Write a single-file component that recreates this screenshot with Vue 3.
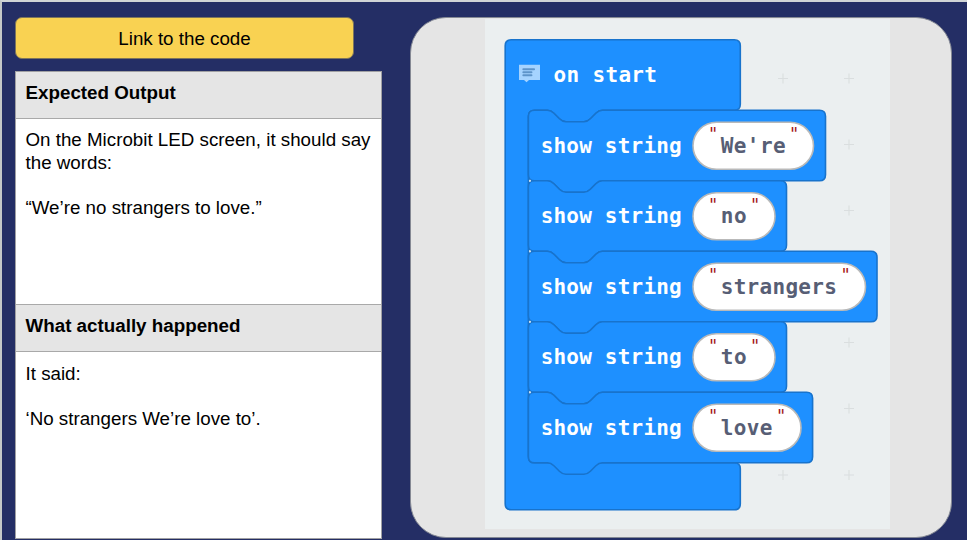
<script setup>
const rows = [
  { text: "We're", y: 110.3, right: 825.5, pill: 120.5, quote: 789, width: 65 },
  { text: 'no', y: 180.8, right: 786.5, pill: 82, quote: 750, width: 26 },
  { text: 'strangers', y: 251.3, right: 877, pill: 172.5, quote: 840.5, width: 116.2 },
  { text: 'to', y: 321.8, right: 786.5, pill: 82, quote: 750, width: 26 },
  { text: 'love', y: 392.3, right: 812.6, pill: 108, quote: 776, width: 51.6 }
]
const marks = [
  [783, 78.5], [849, 78.5], [849, 144.5], [849, 210.5],
  [849, 342.5], [849, 408.5], [783, 475], [849, 475]
]
const notch = 'h13 c3 0 4.5 1 6.5 3 l5.5 5.5 c2 2 4 3 6.5 3 h18 c2.5 0 4.5 -1 6.5 -3 l5.5 -5.5 c2 -2 3.5 -3 6.5 -3'
const notchBack =
  'H602.4 c-3 0 -4.5 1 -6.5 3 l-5.5 5.5 c-2 2 -4 3 -6.5 3 h-18 c-2.5 0 -4.5 -1 -6.5 -3 l-5.5 -5.5 c-2 -2 -3.5 -3 -6.5 -3 H534.4'
const outer =
  `M511.2 39.8 H734.3 q6 0 6 6 V104.3 q0 6 -6 6 ${notchBack} q-6 0 -6 6 V456.8 q0 6 6 6 H734.3 q6 0 6 6 V503.8 q0 6 -6 6 H511.2 q-6 0 -6 -6 V45.8 q0 -6 6 -6Z`
const statement = (r) =>
  `M534.4 ${r.y} ${notch} H${r.right - 6} q6 0 6 6 v58.5 q0 6 -6 6 ${notchBack} q-6 0 -6 -6 v-58.5 q0 -6 6 -6 Z`
</script>

<template>
  <main class="slide">
    <section class="left">
      <a class="link">Link to the code</a>
      <div class="table">
        <h2>Expected Output</h2>
        <div class="cell expected">
          <p>On the Microbit LED screen, it should say the words:</p>
          <p>“We’re no strangers to love.”</p>
        </div>
        <h2>What actually happened</h2>
        <div class="cell actual">
          <p>It said:</p>
          <p>‘No strangers We’re love to’.</p>
        </div>
      </div>
    </section>
    <section class="panel">
      <svg class="workspace" viewBox="485 19 405 510" width="405" height="510">
        <rect x="485" y="19" width="405" height="510" fill="#ebeff0" />
        <path v-for="(m, i) in marks" :key="i" :d="`M${m[0] - 5} ${m[1]}h10M${m[0]} ${m[1] - 5}v10`" stroke="#dadedf" stroke-width="1.1" />
        <path class="block" :d="outer" />
        <path d="M519 64.7h21v15.3h-11l-2.5 2.3l-2.5 -2.3h-5z" fill="#a5d3ff" />
        <path d="M523.3 69.2h10.8M523.3 72.3h8.2M523.3 75.2h8.2" stroke="#5d94ca" stroke-width="1.9" stroke-linecap="round" />
        <text class="label" x="553.5" y="82" textLength="103.5">on start</text>
        <g v-for="r in rows" :key="r.text">
          <path class="block" :d="statement(r)" />
          <text class="label" x="540.7" :y="r.y + 42.6" textLength="141">show string</text>
          <rect class="pill" x="693" :y="r.y + 11.9" :width="r.pill" height="47" rx="23.5" />
          <text class="quote" x="708" :y="r.y + 30">"</text>
          <text class="value" x="720.7" :y="r.y + 42.6" :textLength="r.width">{{ r.text }}</text>
          <text class="quote" :x="r.quote" :y="r.y + 30">"</text>
        </g>
        <g fill="#c8def0">
          <circle v-for="r in rows.slice(1)" :key="r.y" cx="530" :cy="r.y" r="1.1" />
        </g>
      </svg>
    </section>
  </main>
</template>

<style>
body { margin: 0; overflow: hidden; }
</style>
<style scoped>
.slide {
  box-sizing: border-box;
  width: 967px;
  height: 540px;
  padding: 15px 0 0 13px;
  border-top: 2px solid #d0d4d6;
  border-left: 2px solid #c5c8c8;
  background: #242e65;
  display: flex;
  align-items: flex-start;
  font-family: "Liberation Sans", Arial, sans-serif;
  font-size: 18.75px;
  color: #000;
  overflow: hidden;
}
.left { width: 367px; flex: none; }
.link {
  box-sizing: border-box;
  display: block;
  width: 339px;
  height: 42px;
  border: 1px solid #7d755c;
  border-radius: 7px;
  background: #f9d252;
  text-align: center;
  line-height: 41px;
}
.table {
  box-sizing: border-box;
  margin-top: 12px;
  width: 367px;
  height: 468px;
  border: 1px solid #a0a0a3;
  background: #fff;
}
h2 {
  box-sizing: border-box;
  margin: 0;
  height: 46px;
  padding: 10px 0 0 9.5px;
  font-size: 18.8px;
  line-height: 21px;
  background: #e5e5e5;
}
.cell {
  box-sizing: border-box;
  border-top: 1px solid #a9a9a9;
  padding: 10px 0 0 9.5px;
  line-height: 22.5px;
}
.expected { height: 187px; border-bottom: 1px solid #a9a9a9; }
.actual { height: 187px; padding-top: 11px; }
p { margin: 0 0 22.5px; }
.panel {
  box-sizing: border-box;
  margin-left: 28px;
  width: 542px;
  height: 521px;
  flex: none;
  padding: 1px 0 0 74px;
  border: 1px solid #858994;
  border-radius: 36px;
  background: #e5e5e5;
}
.workspace { display: block; }
.block { fill: #1e90ff; stroke: #1873cc; stroke-width: 1.6; }
.pill { fill: #fff; stroke: #b9b9b9; stroke-width: 1.6; }
text { font-family: "DejaVu Sans Mono", monospace; font-size: 21px; font-weight: bold; }
.label { fill: #fff; }
.value { fill: #575e75; }
.quote { fill: #a31515; font-size: 17px; font-weight: normal; }
</style>
